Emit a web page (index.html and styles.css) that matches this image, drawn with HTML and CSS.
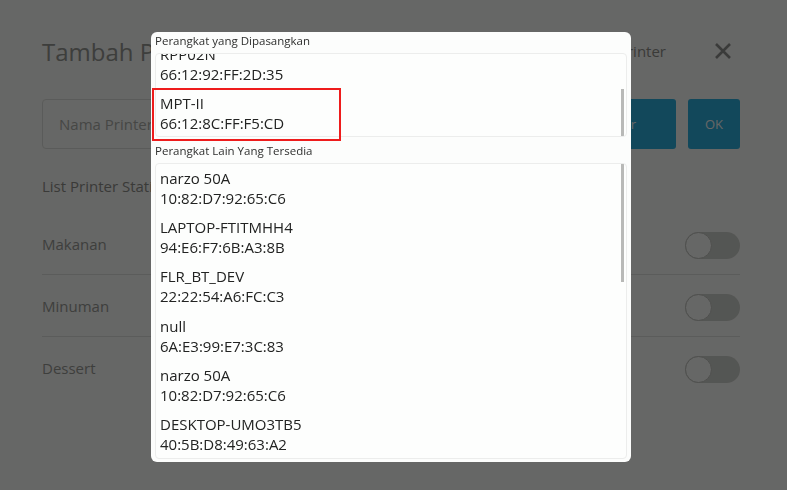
FILE: index.html
```html
<!DOCTYPE html>
<html lang="id">
<head>
  <meta charset="UTF-8" />
  <meta name="viewport" content="width=device-width, initial-scale=1.0"/>
  <title>Tambah Printer</title>
  <link rel="stylesheet" href="styles.css">
</head>
<body>
  <div class="page">
    <div class="head">
      <h1>Tambah Printer</h1>
      <div class="head-right">
        <span class="find">Cari Printer</span>
        <svg class="close" width="18" height="18" viewBox="0 0 18 18">
          <path d="M2 2 L16 16 M16 2 L2 16" stroke="currentColor" stroke-width="2.6" fill="none"/>
        </svg>
      </div>
    </div>

    <div class="form-row">
      <div class="input">Nama Printer</div>
      <button class="btn btn-wide">Cari Printer</button>
      <button class="btn">OK</button>
    </div>

    <div class="section-title">List Printer Station</div>

    <div class="stations">
      <div class="station"><span>Makanan</span><span class="toggle"></span></div>
      <div class="station"><span>Minuman</span><span class="toggle"></span></div>
      <div class="station"><span>Dessert</span><span class="toggle"></span></div>
    </div>
  </div>

  <div class="overlay"></div>

  <div class="dialog">
    <div class="dialog-title">Perangkat yang Dipasangkan</div>
    <div class="list list-paired">
      <div class="list-inner scrolled">
        <div class="device"><div>RPP02N</div><div>66:12:92:FF:2D:35</div></div>
        <div class="device"><div>MPT-II</div><div>66:12:8C:FF:F5:CD</div></div>
      </div>
      <div class="thumb thumb-paired"></div>
    </div>

    <div class="dialog-title second">Perangkat Lain Yang Tersedia</div>
    <div class="list list-other">
      <div class="list-inner">
        <div class="device"><div>narzo 50A</div><div>10:82:D7:92:65:C6</div></div>
        <div class="device"><div>LAPTOP-FTITMHH4</div><div>94:E6:F7:6B:A3:8B</div></div>
        <div class="device"><div>FLR_BT_DEV</div><div>22:22:54:A6:FC:C3</div></div>
        <div class="device"><div>null</div><div>6A:E3:99:E7:3C:83</div></div>
        <div class="device"><div>narzo 50A</div><div>10:82:D7:92:65:C6</div></div>
        <div class="device"><div>DESKTOP-UMO3TB5</div><div>40:5B:D8:49:63:A2</div></div>
      </div>
      <div class="thumb thumb-other"></div>
    </div>
  </div>

  <div class="highlight"></div>
</body>
</html>
```

FILE: styles.css
```css
body {
  font-family: 'Open Sans', sans-serif;
  background-color: #fdfefc;
  margin: 0;
  padding: 0;
  width: 787px;
  height: 490px;
  overflow: hidden;
}

.page {
  padding: 30px 47px 0 42px;
  color: #8f918c;
}

.head {
  display: flex;
  justify-content: space-between;
  align-items: center;
  height: 42px;
}

h1 {
  margin: 0;
  font-size: 24px;
  font-weight: 400;
  color: #979995;
}

.head-right {
  display: flex;
  align-items: center;
  gap: 48px;
  padding-right: 8px;
}

.find {
  font-size: 15px;
  color: #8f918c;
}

.close {
  color: #909290;
}

.form-row {
  display: flex;
  gap: 12px;
  margin-top: 27px;
  height: 50px;
}

.input {
  flex: 1;
  border: 1px solid #dfe2de;
  border-radius: 4px;
  display: flex;
  align-items: center;
  padding-left: 16px;
  font-size: 15px;
  color: #aeb0ac;
}

.btn {
  border: none;
  border-radius: 3px;
  background-color: #2db2e1;
  color: #fdfefc;
  font-family: inherit;
  font-size: 13px;
  width: 52px;
  padding: 0;
}

.btn-wide {
  width: auto;
  padding: 0 40px;
}

.section-title {
  margin-top: 27px;
  font-size: 15px;
  height: 20px;
  line-height: 20px;
  color: #8f918c;
}

.stations {
  margin-top: 17px;
}

.station {
  display: flex;
  justify-content: space-between;
  align-items: center;
  height: 61px;
  border-bottom: 1px solid #e2e4e0;
  font-size: 15px;
  color: #9a9c98;
}

.station:last-child {
  border-bottom: none;
}

.toggle {
  position: relative;
  width: 55px;
  height: 27px;
  margin-top: 4px;
  border-radius: 14px;
  background-color: #d1d5cf;
}

.toggle::before {
  content: "";
  position: absolute;
  left: 0;
  top: 0;
  width: 25px;
  height: 25px;
  border-radius: 50%;
  border: 1px solid #c3c6c1;
  background-color: #fdfefc;
}

.overlay {
  position: fixed;
  inset: 0;
  background-color: rgba(0, 0, 0, 0.595);
}

.dialog {
  position: fixed;
  left: 151px;
  top: 32px;
  width: 472px;
  height: 427px;
  padding: 0 4px 3px;
  background-color: #fcfdfc;
  border-radius: 6px;
  display: flex;
  flex-direction: column;
}

.dialog-title {
  font-size: 11.5px;
  color: #2e2f2e;
  height: 21px;
  line-height: 18px;
}

.dialog-title.second {
  height: 22px;
  margin-top: 4px;
  line-height: 20px;
}

.list {
  position: relative;
  overflow: hidden;
  border: 1px solid #ecedec;
  border-radius: 4px;
  background-color: #fdfefd;
}

.list-paired {
  height: 82px;
  flex: none;
}

.list-other {
  flex: 1;
}

.list-inner {
  padding-top: 4px;
}

.list-inner.scrolled {
  margin-top: -14px;
}

.device {
  padding: 0 4px;
  height: 49.2px;
  font-size: 15px;
  line-height: 20px;
  color: #222322;
}

.thumb {
  position: absolute;
  right: 2px;
  width: 3px;
  background-color: #b8b9b7;
}

.thumb-paired {
  top: 35px;
  height: 47px;
}

.thumb-other {
  top: 0;
  height: 118px;
}

.highlight {
  position: fixed;
  left: 152px;
  top: 88px;
  width: 185px;
  height: 49px;
  border: 2px solid #ee1c1c;
}
```
